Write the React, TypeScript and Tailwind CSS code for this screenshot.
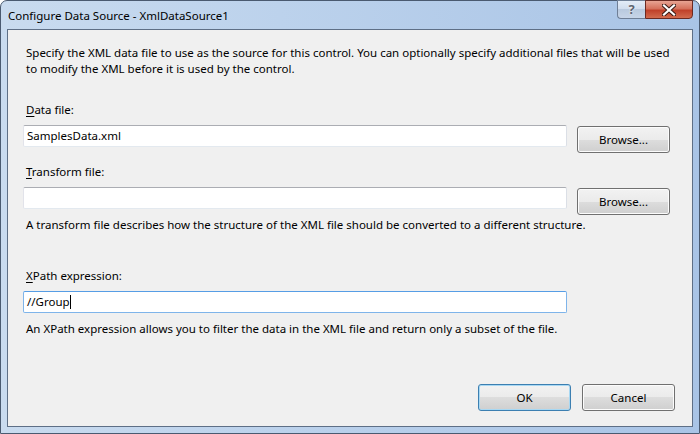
import React from "react";

const font = "[font-family:'Noto_Sans',sans-serif]";

const Label = ({ k, rest }: { k: string; rest: string }) => (
  <div className="h-4 leading-4 pl-[18px]">
    <span className="underline underline-offset-2">{k}</span>
    {rest}
  </div>
);

const Field = ({ value, focused }: { value?: string; focused?: boolean }) => (
  <div
    className={
      "h-[22px] w-[544px] rounded-[2px] bg-white border px-[3px] leading-[20px] " +
      (focused
        ? "border-[#7eb4ea] border-t-[#569de5]"
        : "border-[#e3e9ef] border-t-[#abadb3] border-l-[#e2e3ea] border-r-[#dbdfe6]")
    }
  >
    {value}
    {focused && <span className="inline-block w-px h-[14px] bg-black align-middle -mt-[2px]" />}
  </div>
);

const Button = ({ children, primary }: { children: React.ReactNode; primary?: boolean }) => (
  <div
    className={
      "w-[93px] h-[27px] rounded-[3px] border flex items-center justify-center " +
      "bg-[linear-gradient(#f2f2f2_0%,#ebebeb_50%,#dddddd_50%,#cfcfcf_100%)] " +
      (primary ? "border-[#3c7fb1] shadow-[inset_0_0_0_1px_#a8d8f3]" : "border-[#707070] shadow-[inset_0_0_0_1px_#fcfcfc]")
    }
  >
    {children}
  </div>
);

export default function App() {
  return (
    <div className={"w-[700px] h-[434px] overflow-hidden " + font}>
      <div className="w-[700px] h-[434px] rounded-t-[7px] border border-[#4a5a70] bg-[linear-gradient(90deg,#c9dbef_0%,#bcd2ec_40%,#a9c4e6_100%)] flex flex-col">
        {/* title bar */}
        <div className="h-[28px] flex items-start justify-between shrink-0">
          <div className="pl-[7px] pt-[7px] text-[11.5px] leading-4 text-black">
            Configure Data Source - XmlDataSource1
          </div>
          <div className="flex mr-[6px] -mt-px">
            <div className="w-[28px] h-[19px] rounded-bl-[4px] border border-[#6f7f96] border-r-0 bg-[linear-gradient(#e3ecf7_0%,#d0dced_50%,#b9c9de_50%,#c7d5e8_100%)] flex items-center justify-center text-[13px] font-bold text-[#5d6470] [text-shadow:0_0_2px_#fff]">
              ?
            </div>
            <div className="w-[48px] h-[19px] rounded-br-[4px] border border-[#6b2a22] bg-[linear-gradient(#e8a493_0%,#d5715c_45%,#c0412a_55%,#d26b4e_100%)] flex items-center justify-center">
              <svg width="14" height="12" viewBox="0 0 14 12">
                <path d="M2 1.5 L12 10.5 M12 1.5 L2 10.5" stroke="#3b1a14" strokeWidth="4.2" strokeLinecap="square" />
                <path d="M2 1.5 L12 10.5 M12 1.5 L2 10.5" stroke="#ffffff" strokeWidth="2.2" strokeLinecap="square" />
              </svg>
            </div>
          </div>
        </div>

        {/* client area */}
        <div className="ml-[6px] mr-[6px] h-[398px] border border-[#5e6f86] bg-[#f0f0f0] text-[11.5px] text-black flex flex-col">
          <div className="pl-[18px] pt-[15px] leading-4">
            Specify the XML data file to use as the source for this control. You can optionally specify additional files that will be used
            <br />
            to modify the XML before it is used by the control.
          </div>

          <div className="mt-[25px]">
            <Label k="D" rest="ata file:" />
          </div>
          <div className="mt-[7px] pl-[15px] flex items-start gap-[10px]">
            <Field value="SamplesData.xml" />
            <div className="mt-px">
              <Button>Browse...</Button>
            </div>
          </div>

          <div className="mt-[11px]">
            <Label k="T" rest="ransform file:" />
          </div>
          <div className="mt-[7px] pl-[15px] flex items-start gap-[10px]">
            <Field />
            <div className="mt-px">
              <Button>Browse...</Button>
            </div>
          </div>
          <div className="mt-[2px] pl-[18px] leading-4">
            A transform file describes how the structure of the XML file should be converted to a different structure.
          </div>

          <div className="mt-[35px]">
            <Label k="X" rest="Path expression:" />
          </div>
          <div className="mt-[7px] pl-[15px]">
            <Field value="//Group" focused />
          </div>
          <div className="mt-[8px] pl-[18px] leading-4">
            An XPath expression allows you to filter the data in the XML file and return only a subset of the file.
          </div>

          <div className="mt-auto mb-[15px] pr-[17px] flex justify-end gap-[11px]">
            <Button primary>OK</Button>
            <Button>Cancel</Button>
          </div>
        </div>
      </div>
    </div>
  );
}
